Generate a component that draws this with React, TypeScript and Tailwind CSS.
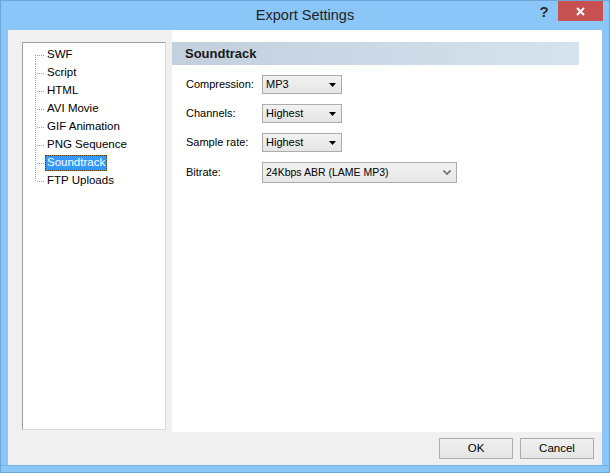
import React from "react";

const treeItems = [
  "SWF",
  "Script",
  "HTML",
  "AVI Movie",
  "GIF Animation",
  "PNG Sequence",
  "Soundtrack",
  "FTP Uploads",
];

function TreeConnector({ first, last }: { first: boolean; last: boolean }) {
  // dotted vertical + horizontal guide lines of a classic tree view
  const y1 = first ? 9 : 0;
  const y2 = last ? 9 : 18;
  return (
    <svg width="10" height="18" className="shrink-0" shapeRendering="crispEdges">
      <line x1="0.5" y1={y1} x2="0.5" y2={y2} stroke="#a0a0a0" strokeDasharray="1 1" />
      <line x1="2" y1="9.5" x2="10" y2="9.5" stroke="#a0a0a0" strokeDasharray="1 1" />
    </svg>
  );
}

function DropDown({ value }: { value: string }) {
  return (
    <div className="flex h-[19px] w-[80px] items-center justify-between border border-[#acacac] bg-gradient-to-b from-[#f2f2f2] to-[#e5e5e5] pl-[3px] pr-[5px]">
      <span className="leading-none">{value}</span>
      <svg width="7" height="4" viewBox="0 0 7 4">
        <path d="M0 0H7L3.5 4Z" fill="#000" />
      </svg>
    </div>
  );
}

function FormRow({ label, children }: { label: string; children: React.ReactNode }) {
  return (
    <div className="flex items-center">
      <span className="w-[76px] shrink-0">{label}</span>
      {children}
    </div>
  );
}

function DialogButton({ label }: { label: string }) {
  return (
    <button className="h-[21px] w-[74px] border border-[#acacac] bg-gradient-to-b from-[#f0f0f0] to-[#e5e5e5] text-[11.5px] text-black">
      {label}
    </button>
  );
}

export default function App() {
  return (
    <div
      className="flex h-[473px] w-[610px] flex-col border border-[#6fa6da] bg-[#8bc6f8] text-[11px] text-black"
      style={{ fontFamily: '"Liberation Sans", Arial, sans-serif' }}
    >
      {/* Title bar */}
      <div className="grid h-[29px] shrink-0 grid-cols-[1fr_auto_1fr]">
        <div />
        <div className="flex items-center text-[14.5px] text-[#222]">Export Settings</div>
        <div className="flex items-start justify-end pr-[6px]">
          <div className="flex h-[20px] w-[28px] items-center justify-center pt-[3px] text-[15px] font-bold text-[#2a2a2a]">
            ?
          </div>
          <div className="flex h-[20px] w-[45px] items-center justify-center bg-[#c75050]">
            <svg width="9" height="9" viewBox="0 0 9 9">
              <path d="M1 1L8 8M8 1L1 8" stroke="#fff" strokeWidth="2" />
            </svg>
          </div>
        </div>
      </div>

      {/* Client area */}
      <div className="mx-[7px] flex flex-1 flex-col bg-[#f0f0f0]">
        <div className="flex h-[402px]">
          {/* Tree */}
          <div className="w-[164px] shrink-0 pl-[14px] pt-[12px]">
            <div className="h-[388px] w-[144px] border border-t-[#a0a0a0] border-l-[#a0a0a0] border-r-[#dcdcdc] border-b-[#dcdcdc] bg-white pl-[12px] pt-[3px] text-[11.5px]">
              {treeItems.map((item, i) => {
                const selected = item === "Soundtrack";
                return (
                  <div key={item} className="flex h-[18px] items-center">
                    <TreeConnector first={i === 0} last={i === treeItems.length - 1} />
                    <span
                      className={
                        selected
                          ? "flex h-[16px] items-center border border-dotted border-[#5a3a00] bg-[#3399ff] px-[1px] text-white"
                          : "flex h-[16px] items-center px-[2px]"
                      }
                    >
                      {item}
                    </span>
                  </div>
                );
              })}
            </div>
          </div>

          {/* Settings page */}
          <div className="flex-1 bg-white pt-[12px]">
            <div className="flex h-[23px] w-[407px] items-center bg-gradient-to-r from-[#c2cfdc] to-[#d6e3ef] pl-[13px] text-[13px] font-bold text-[#1a1a1a]">
              Soundtrack
            </div>
            <div className="mt-[10px] flex flex-col gap-[10px] pl-[14px]">
              <FormRow label="Compression:">
                <DropDown value="MP3" />
              </FormRow>
              <FormRow label="Channels:">
                <DropDown value="Highest" />
              </FormRow>
              <FormRow label="Sample rate:">
                <DropDown value="Highest" />
              </FormRow>
              <FormRow label="Bitrate:">
                <div className="flex h-[21px] w-[195px] items-center justify-between border border-[#acacac] bg-gradient-to-b from-[#f2f2f2] to-[#e6e6e6] pl-[3px] pr-[5px]">
                  <span className="text-[10.5px] leading-none">24Kbps ABR (LAME MP3)</span>
                  <svg width="8" height="5" viewBox="0 0 8 5">
                    <path d="M0.5 0.5L4 4L7.5 0.5" stroke="#6a6a6a" strokeWidth="1.6" fill="none" />
                  </svg>
                </div>
              </FormRow>
            </div>
          </div>
        </div>

        {/* Buttons */}
        <div className="flex flex-1 items-start justify-end gap-[7px] pr-[8px] pt-[6px]">
          <DialogButton label="OK" />
          <DialogButton label="Cancel" />
        </div>
      </div>

      {/* Bottom frame */}
      <div className="h-[7px] shrink-0 border-t border-[#78b0e4]" />
    </div>
  );
}
